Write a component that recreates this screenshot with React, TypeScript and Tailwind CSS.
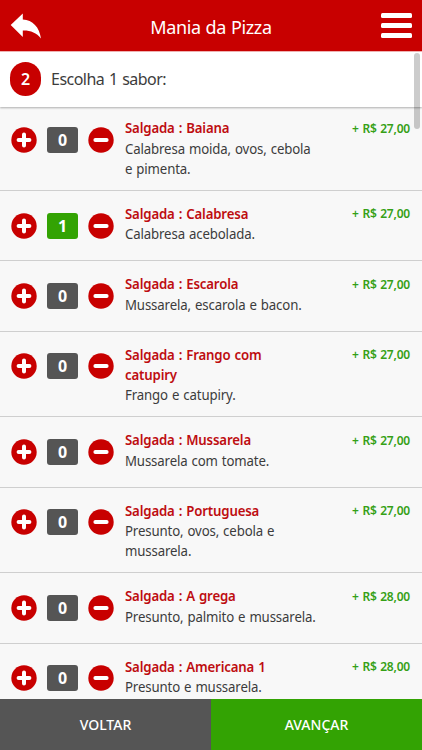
import { useState } from 'react'

interface Flavor {
  name: string
  description: string
  price: string
  quantity: number
}

const initialFlavors: Flavor[] = [
  { name: 'Baiana', description: 'Calabresa moida, ovos, cebola e pimenta.', price: '27,00', quantity: 0 },
  { name: 'Calabresa', description: 'Calabresa acebolada.', price: '27,00', quantity: 1 },
  { name: 'Escarola', description: 'Mussarela, escarola e bacon.', price: '27,00', quantity: 0 },
  { name: 'Frango com catupiry', description: 'Frango e catupiry.', price: '27,00', quantity: 0 },
  { name: 'Mussarela', description: 'Mussarela com tomate.', price: '27,00', quantity: 0 },
  { name: 'Portuguesa', description: 'Presunto, ovos, cebola e mussarela.', price: '27,00', quantity: 0 },
  { name: 'A grega', description: 'Presunto, palmito e mussarela.', price: '28,00', quantity: 0 },
  { name: 'Americana 1', description: 'Presunto e mussarela.', price: '28,00', quantity: 0 },
]

function RoundButton({ label, plus, onClick }: { label: string; plus?: boolean; onClick: () => void }) {
  return (
    <button aria-label={label} onClick={onClick} className="shrink-0">
      <svg viewBox="0 0 26 26" className="block h-[26px] w-[26px]">
        <circle cx="13" cy="13" r="12.7" fill="#c80000" />
        <path
          d={plus ? 'M7.6 13h10.8M13 7.6v10.8' : 'M7.4 13h11.2'}
          stroke="#fff"
          strokeWidth="4"
          strokeLinecap="round"
        />
      </svg>
    </button>
  )
}

function FlavorRow({ flavor, onChange }: { flavor: Flavor; onChange: (delta: number) => void }) {
  return (
    <li className="flex min-h-[70.3px] items-start border-t border-[#cfcfcf] pr-3 pb-[11.5px] pl-[11px]">
      <div className="flex items-center pt-[21.8px]">
        <RoundButton plus label="Adicionar" onClick={() => onChange(1)} />
        <span
          className={`mr-[9.6px] ml-[10px] flex h-[26px] w-[31px] items-center justify-center rounded-[3px] text-[16px] font-bold text-white ${
            flavor.quantity > 0 ? 'bg-[#33a303]' : 'bg-[#555555]'
          }`}
        >
          {flavor.quantity}
        </span>
        <RoundButton label="Remover" onClick={() => onChange(-1)} />
      </div>
      {/* slightly condensed text block */}
      <div className="ml-[11.9px] w-[212px] shrink-0 origin-left scale-x-[0.906] pt-[12px] text-[14.6px] leading-[20.4px] tracking-[-0.15px] [word-spacing:0.8px]">
        <p className="font-[570] tracking-[-0.17px] text-[#be0d10]">Salgada : {flavor.name}</p>
        <p className="text-[#3c3c3c]">{flavor.description}</p>
      </div>
      <span className="ml-auto pt-[13.3px] text-[12px] leading-[20.4px] font-[570] tracking-[-0.2px] whitespace-nowrap text-[#35a016] [word-spacing:0.7px]">
        + R$ {flavor.price}
      </span>
    </li>
  )
}

export default function App() {
  const [flavors, setFlavors] = useState(initialFlavors)

  const change = (index: number, delta: number) => {
    setFlavors(list =>
      list.map((f, i) => (i === index ? { ...f, quantity: Math.max(0, f.quantity + delta) } : f)),
    )
  }

  return (
    <div className="relative flex h-[750px] w-[422px] flex-col overflow-hidden bg-[#f8f8f8] font-['Noto_Sans','Open_Sans',sans-serif]">
      <header className="flex h-[52px] shrink-0 items-center justify-between border-b border-[#f3b5b5] bg-[#c80000] px-[10px]">
        <button aria-label="Voltar" className="mt-[1px]">
          <svg viewBox="0 0 31 26" className="block h-[26px] w-[31px]" fill="#fff">
            <path d="M.7 12 12.8.4v6.1C22.8 7 29.3 14 31 25.5 26.3 19.6 20.5 17.3 12.8 17.5v6.4Z" />
          </svg>
        </button>
        <h1 className="pt-[3px] text-[18px] tracking-[-0.35px] text-white [word-spacing:0.5px]">Mania da Pizza</h1>
        <button aria-label="Menu" className="flex flex-col gap-[5px]">
          <span className="h-[5px] w-[31px] rounded-[1.5px] bg-white" />
          <span className="h-[5px] w-[31px] rounded-[1.5px] bg-white" />
          <span className="h-[5px] w-[31px] rounded-[1.5px] bg-white" />
        </button>
      </header>

      <section className="z-10 flex h-[54.5px] shrink-0 items-center bg-white pl-[10px] shadow-[0_1px_2px_rgba(0,0,0,0.3)]">
        <span className="flex h-[34px] w-[31px] items-center justify-center rounded-full bg-[#c80000] text-[16px] font-semibold text-white">
          2
        </span>
        <h2 className="ml-[10px] text-[16px] tracking-[-0.52px] text-[#3c3c3c] [word-spacing:1px]">Escolha 1 sabor:</h2>
      </section>

      <ul className="-mt-[2.3px] min-h-0 flex-1 overflow-hidden">
        {flavors.map((flavor, i) => (
          <FlavorRow key={flavor.name} flavor={flavor} onChange={delta => change(i, delta)} />
        ))}
      </ul>

      <footer className="flex h-[51px] shrink-0 text-[14px] font-medium text-white">
        <button className="flex-1 bg-[#555555]">VOLTAR</button>
        <button className="flex-1 bg-[#33a303]">AVANÇAR</button>
      </footer>

      {/* scrollbar thumb */}
      <div className="absolute top-[53px] right-[2px] z-20 h-[76px] w-[6px] rounded-full bg-black/20" />
    </div>
  )
}
